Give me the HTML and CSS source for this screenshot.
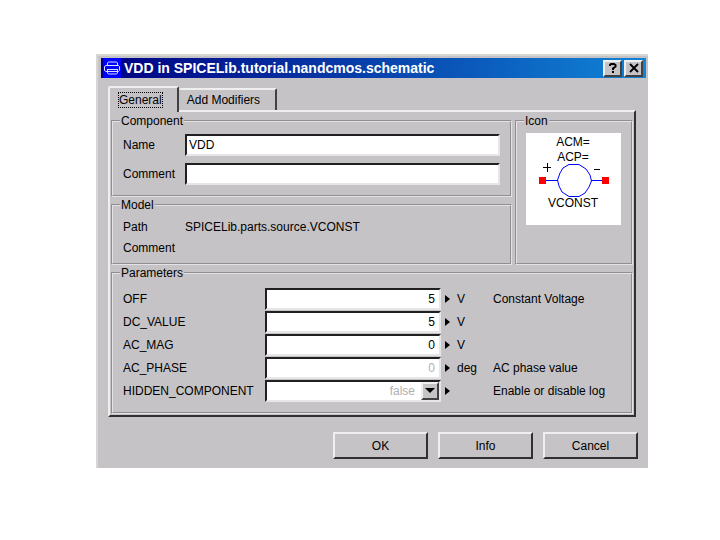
FILE: index.html
```html
<!DOCTYPE html>
<html lang="en">
<head>
<meta charset="utf-8">
<title>VDD in SPICELib.tutorial.nandcmos.schematic</title>
<link rel="stylesheet" href="styles.css">
</head>
<body>
<main class="window">
  <header class="titlebar">
    <svg class="app-icon" width="18" height="20" viewBox="0 0 18 20" aria-hidden="true">
      <rect width="18" height="20" fill="#0000ff"/>
      <path d="M4.500 8V5L5.500 4H13.500L14.500 5V8M3 7.500H15.500L16.500 8.500V12.500L15.500 13.500H3L1.500 12.500V8.500ZM4.500 11V15L5.500 16H13.500L14.500 15V11M4.500 11.500H14.500" fill="none" stroke="#dcdcff"/>
    </svg>
    <h1 class="title">VDD in SPICELib.tutorial.nandcmos.schematic</h1>
    <button class="caption-button" type="button" aria-label="Help">
      <svg width="12" height="12" viewBox="0 0 12 12"><path d="M3 4V3L4 2H7L8.500 3V4.500L6 6.500V8M6 9V11" fill="none" stroke="#000" stroke-width="2"/></svg>
    </button>
    <button class="caption-button" type="button" aria-label="Close">
      <svg width="12" height="12" viewBox="0 0 12 12"><path d="M2 2L10 10M10 2L2 10" fill="none" stroke="#000" stroke-width="1.800"/></svg>
    </button>
  </header>

  <form class="content">
    <div class="tabs" role="tablist">
      <button class="tab tab-active" type="button" role="tab" aria-selected="true"><span class="focus">General</span></button>
      <button class="tab" type="button" role="tab" aria-selected="false">Add Modifiers</button>
    </div>

    <div class="panel" role="tabpanel">
      <div class="top">
        <div class="top-left">
          <fieldset class="group component">
            <legend>Component</legend>
            <div class="field"><label for="name">Name</label><input id="name" class="text" type="text" value="VDD"></div>
            <div class="field"><label for="comment">Comment</label><input id="comment" class="text" type="text"></div>
          </fieldset>
          <fieldset class="group model">
            <legend>Model</legend>
            <div class="field info"><span>Path</span><span>SPICELib.parts.source.VCONST</span></div>
            <div class="field info"><span>Comment</span></div>
          </fieldset>
        </div>
        <fieldset class="group icon-group">
          <legend>Icon</legend>
          <svg class="symbol" width="95" height="92" viewBox="0 0 95 92" role="img" aria-label="VCONST symbol">
            <rect width="95" height="92" fill="#fff"/>
            <path d="M16 47.500H32M65 47.500H79M43 31.500H53L60 36L64 42L65.500 48L63 54L59 60L53 63.500H43L36 59L33 53L31.500 47L34 40L37 35Z" fill="none" stroke="#0000ff"/>
            <path d="M13 44h7v7h-7zM76 44h7v7h-7z" fill="#ff0000"/>
            <path d="M17 34.500H25M21.500 30V39M68 36.500H74" fill="none" stroke="#000"/>
            <text x="47" y="13">ACM=</text>
            <text x="47" y="28">ACP=</text>
            <text x="47" y="74">VCONST</text>
          </svg>
        </fieldset>
      </div>

      <fieldset class="group parameters">
        <legend>Parameters</legend>
        <div class="param"><label for="off">OFF</label><input id="off" class="text number" type="text" value="5"><span class="arrow"></span><span>V</span><span>Constant Voltage</span></div>
        <div class="param"><label for="dc">DC_VALUE</label><input id="dc" class="text number" type="text" value="5"><span class="arrow"></span><span>V</span></div>
        <div class="param"><label for="mag">AC_MAG</label><input id="mag" class="text number" type="text" value="0"><span class="arrow"></span><span>V</span></div>
        <div class="param"><label for="phase">AC_PHASE</label><input id="phase" class="text number default" type="text" value="0"><span class="arrow"></span><span>deg</span><span>AC phase value</span></div>
        <div class="param"><label for="hidden">HIDDEN_COMPONENT</label><span class="combo"><select id="hidden" class="text select default"><option>false</option><option>true</option></select><span class="drop"></span></span><span class="arrow"></span><span></span><span>Enable or disable log</span></div>
      </fieldset>
    </div>

    <div class="actions">
      <button class="button" type="submit">OK</button>
      <button class="button" type="button">Info</button>
      <button class="button" type="button">Cancel</button>
    </div>
  </form>
</main>
</body>
</html>
```
FILE: styles.css
```css
* {
  box-sizing: border-box;
}

body {
  margin: 0;
  padding: 54px 72px 72px 96px;
  background: #fff;
  color: #000;
  font: 12px/16px "Liberation Sans", Arial, sans-serif;
}

button,
input,
select {
  margin: 0;
  color: inherit;
  font: inherit;
  border-radius: 0;
}

.window {
  padding: 2px 2px 9px 3px;
  background: #c6c3c6;
  border: solid #d8d6d2;
  border-width: 2px 0 0 2px;
}

.titlebar {
  display: flex;
  align-items: center;
  gap: 2px;
  height: 20px;
  padding: 0 3px 0 2px;
  background: linear-gradient(90deg, #000082, #1084d6);
}

.app-icon {
  flex: none;
}

.title {
  flex: 1;
  margin: 0 0 0 1px;
  color: #fff;
  font: bold 14px/20px "Liberation Sans", Arial, sans-serif;
  white-space: nowrap;
}

.caption-button {
  display: flex;
  align-items: center;
  justify-content: center;
  width: 19px;
  height: 17px;
  padding: 0;
  background: #c6c3c6;
  border: 2px solid;
  border-color: #efefef #424142 #424142 #efefef;
}

.content {
  padding: 8px 8px 0 7px;
}

.tabs {
  display: flex;
  align-items: flex-end;
}

.tab {
  height: 22px;
  margin: 0;
  padding: 0 15px 0 8px;
  background: #c6c3c6;
  border: 2px solid;
  border-color: #efefef #424142 transparent transparent;
  border-width: 2px 2px 0 0;
  border-radius: 2px 2px 0 0;
}

.tab-active {
  position: relative;
  height: 26px;
  margin-bottom: -2px;
  padding: 0 15px 0 9px;
  border-width: 2px 2px 0 2px;
  border-color: #efefef #424142 transparent #efefef;
}

.focus {
  outline: 1px dotted #000;
}

.panel {
  margin-right: 2px;
  padding: 1px;
  border: 2px solid;
  border-color: #efefef #303030 #303030 #efefef;
}

.group {
  min-width: 0;
  margin: 0;
  border: 2px groove #e4e2e4;
}

.group legend {
  margin: 0;
  padding: 0 1px;
  line-height: 16px;
}

.top {
  display: flex;
  gap: 3px;
}

.top-left {
  flex: 1;
}

.component,
.model,
.parameters {
  padding: 5px 10px 10px;
}

.component legend,
.model legend,
.parameters legend {
  margin-left: -3px;
}

.field {
  display: grid;
  grid-template-columns: 62px 1fr;
  align-items: center;
}

.field + .field {
  margin-top: 7px;
}

.model {
  padding: 3px 10px 5px;
}

.model .info {
  height: 21px;
  margin-top: 0;
}

.text {
  width: 100%;
  height: 22px;
  padding: 0 2px;
  background: #fff;
  border: 2px solid;
  border-color: #202020 #e7e5e7 #e7e5e7 #202020;
  outline: 0;
}

.icon-group {
  width: 118px;
  padding: 4px 8px;
}

.icon-group legend {
  margin-left: -1px;
}

.symbol {
  display: block;
  margin-left: 1px;
}

.symbol text {
  font: 12px "Liberation Sans", Arial, sans-serif;
  text-anchor: middle;
}

.parameters {
  padding-top: 6px;
}

.param {
  display: grid;
  grid-template-columns: 142px 1fr 16px 36px 128px;
  align-items: center;
  height: 23px;
  white-space: nowrap;
}

.number {
  padding-right: 4px;
  text-align: right;
}

.default {
  color: #b0b0b0;
}

.arrow {
  width: 0;
  margin-left: 4px;
  border: solid transparent;
  border-width: 4px 0 4px 5px;
  border-left-color: #000;
}

.combo {
  position: relative;
  display: block;
}

.select {
  display: block;
  padding-right: 24px;
  appearance: none;
  text-align: right;
  text-align-last: right;
}

.drop {
  position: absolute;
  top: 2px;
  right: 2px;
  display: flex;
  align-items: center;
  justify-content: center;
  width: 18px;
  height: 18px;
  background: #c6c3c6;
  border: 2px solid;
  border-color: #efefef #424142 #424142 #efefef;
  pointer-events: none;
}

.drop::after {
  content: "";
  border: solid transparent;
  border-width: 5px 5px 0;
  border-top-color: #000;
}

.actions {
  display: flex;
  justify-content: flex-end;
  gap: 10px;
  margin-top: 15px;
}

.button {
  width: 95px;
  height: 27px;
  padding: 0;
  background: #c6c3c6;
  border: 2px solid;
  border-color: #efefef #303030 #303030 #efefef;
}
```
